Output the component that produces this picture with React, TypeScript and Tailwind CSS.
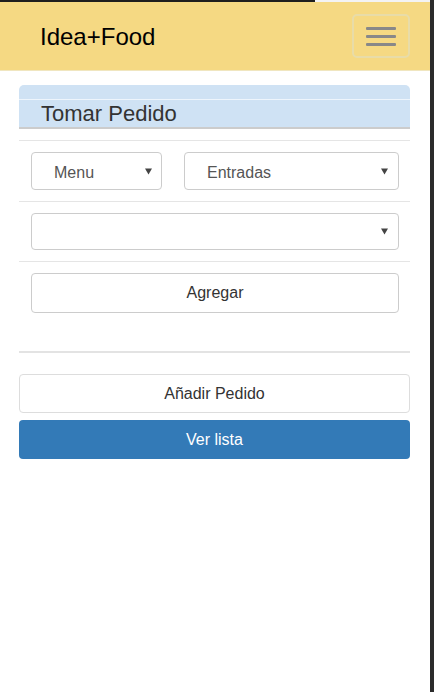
import React from "react";

function Arrow() {
  return (
    <svg width="7" height="7" viewBox="0 0 7 7" className="shrink-0">
      <polygon points="0,0.5 7,0.5 3.5,6.5" fill="#444" />
    </svg>
  );
}

function Select({ label, className }: { label: string; className: string }) {
  return (
    <div
      className={
        "flex items-center justify-between rounded-[4px] border border-[#ccc] bg-white pl-[22px] pr-[9px] text-[16px] text-[#555] " +
        className
      }
    >
      <span className="pt-[3px]">{label}</span>
      <Arrow />
    </div>
  );
}

export default function App() {
  return (
    <div
      className="flex h-[692px] w-[434px] bg-[#2b2b2b]"
      style={{ fontFamily: '"Liberation Sans", Arial, sans-serif' }}
    >
      <div className="flex w-[430px] flex-col bg-white">
        <div className="flex h-[2px]">
          <div className="w-[315px] bg-[#1e1e1e]" />
          <div className="flex-1 bg-[#f3f3f3]" />
        </div>
        <div className="flex h-[69px] items-center justify-between border-b border-[#f0e6c0] bg-[#f5d983] pl-[40px] pr-[20px]">
          <span className="pt-[2px] text-[24px] leading-none text-black">Idea+Food</span>
          <div className="flex h-[44px] w-[58px] flex-col items-center justify-center gap-[5px] rounded-[5px] border-2 border-[#e8dca8]">
            <div className="h-[3px] w-[30px] rounded-[1px] bg-[#888]" />
            <div className="h-[3px] w-[30px] rounded-[1px] bg-[#888]" />
            <div className="h-[3px] w-[30px] rounded-[1px] bg-[#888]" />
          </div>
        </div>

        <div className="flex flex-col pl-[19px] pr-[20px] pt-[14px]">
          <div className="h-[14px] rounded-t-[5px] bg-[#cfe2f4]" />
          <div className="h-[1px] bg-[#eef5fc]" />
          <div className="flex h-[29px] items-end border-b-2 border-[#cccccc] bg-[#cfe2f4] pl-[22px]">
            <span className="text-[22px] leading-[26px] text-[#333]">Tomar Pedido</span>
          </div>

          <div className="mt-[11px] h-[1px] bg-[#e5e5e5]" />
          <div className="flex gap-[22px] pl-[12px] pr-[11px] pt-[11px]">
            <Select label="Menu" className="h-[38px] w-[131px]" />
            <Select label="Entradas" className="h-[38px] flex-1 !pr-[10px]" />
          </div>
          <div className="mt-[11px] h-[1px] bg-[#e5e5e5]" />
          <div className="pl-[12px] pr-[11px] pt-[11px]">
            <Select label="" className="h-[37px] w-full !pr-[10px]" />
          </div>
          <div className="mt-[11px] h-[1px] bg-[#e5e5e5]" />
          <div className="pl-[12px] pr-[11px] pt-[11px]">
            <div className="flex h-[40px] items-center justify-center rounded-[4px] border border-[#ccc] bg-white text-[16px] text-[#333]">
              Agregar
            </div>
          </div>
          <div className="mt-[38px] h-[2px] bg-[#e3e3e3]" />
          <div className="mt-[21px] flex h-[39px] items-center justify-center rounded-[4px] border border-[#ddd] bg-white text-[16px] text-[#333]">
            Añadir Pedido
          </div>
          <div className="mt-[7px] flex h-[39px] items-center justify-center rounded-[4px] bg-[#337ab7] text-[16px] text-white">
            Ver lista
          </div>
        </div>
      </div>
    </div>
  );
}
